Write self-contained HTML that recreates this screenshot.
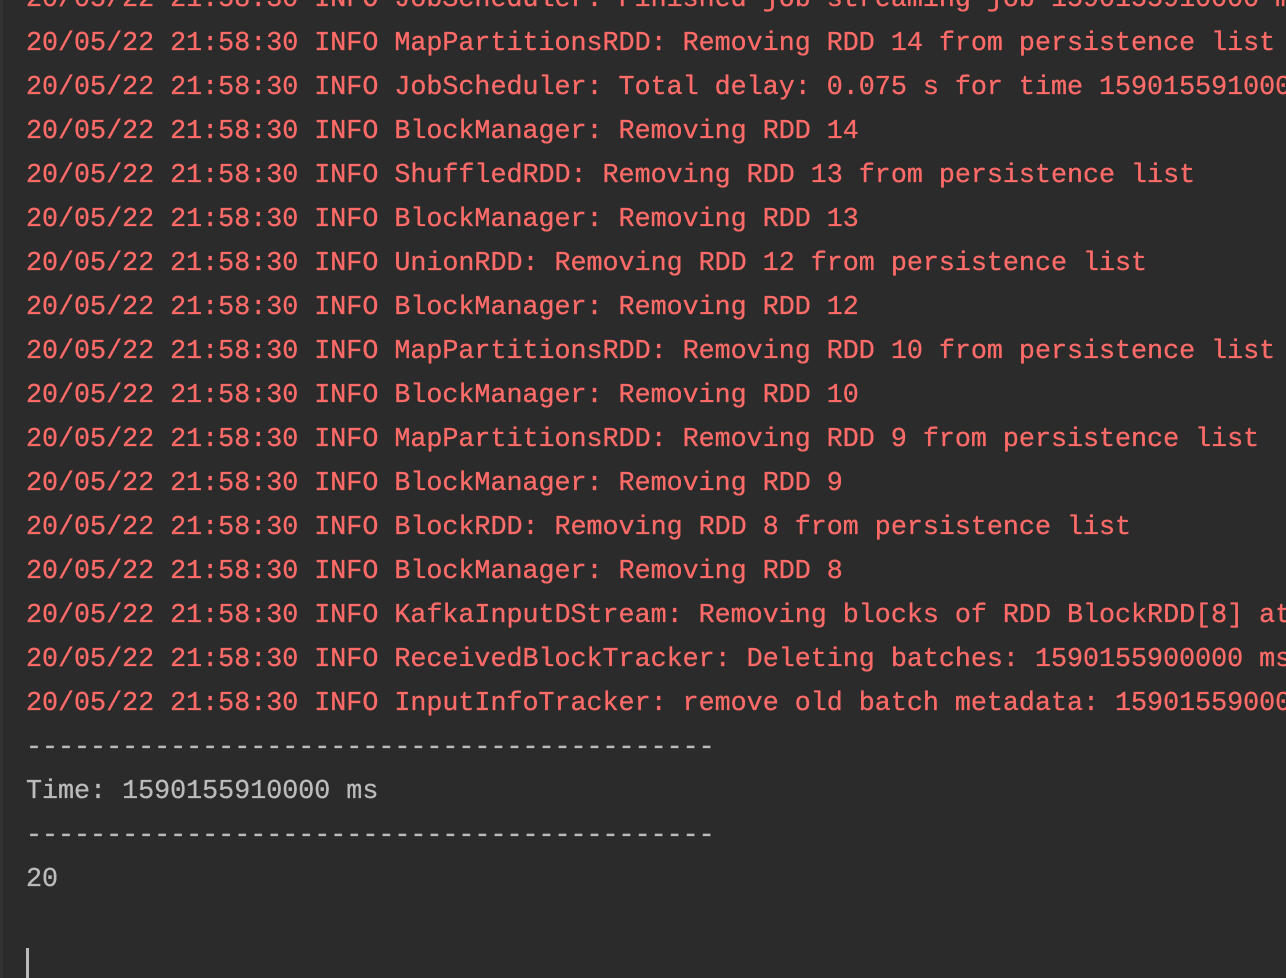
<!DOCTYPE html>
<html><head><meta charset="utf-8"><style>
html,body{margin:0;padding:0;width:1286px;height:978px;overflow:hidden;background:#2b2b2b;}
.strip{position:absolute;left:0;top:0;width:3px;height:978px;background:#313335;}
.c{position:absolute;left:26px;top:-22px;width:1260px;overflow:hidden;font-family:"Liberation Mono",monospace;font-size:26.7px;line-height:44px;white-space:pre;color:#ff6b68;-webkit-text-stroke:0.3px currentColor;}
.g{color:#bbbbbb;}
.cur{position:absolute;left:26px;top:948px;width:3px;height:30px;background:#bbbbbb;}
</style></head><body>
<div class="strip"></div>
<div class="c">20/05/22 21:58:30 INFO JobScheduler: Finished job streaming job 1590155910000 ms.0
20/05/22 21:58:30 INFO MapPartitionsRDD: Removing RDD 14 from persistence list
20/05/22 21:58:30 INFO JobScheduler: Total delay: 0.075 s for time 1590155910000 ms
20/05/22 21:58:30 INFO BlockManager: Removing RDD 14
20/05/22 21:58:30 INFO ShuffledRDD: Removing RDD 13 from persistence list
20/05/22 21:58:30 INFO BlockManager: Removing RDD 13
20/05/22 21:58:30 INFO UnionRDD: Removing RDD 12 from persistence list
20/05/22 21:58:30 INFO BlockManager: Removing RDD 12
20/05/22 21:58:30 INFO MapPartitionsRDD: Removing RDD 10 from persistence list
20/05/22 21:58:30 INFO BlockManager: Removing RDD 10
20/05/22 21:58:30 INFO MapPartitionsRDD: Removing RDD 9 from persistence list
20/05/22 21:58:30 INFO BlockManager: Removing RDD 9
20/05/22 21:58:30 INFO BlockRDD: Removing RDD 8 from persistence list
20/05/22 21:58:30 INFO BlockManager: Removing RDD 8
20/05/22 21:58:30 INFO KafkaInputDStream: Removing blocks of RDD BlockRDD[8] at
20/05/22 21:58:30 INFO ReceivedBlockTracker: Deleting batches: 1590155900000 ms
20/05/22 21:58:30 INFO InputInfoTracker: remove old batch metadata: 1590155900000 ms
<span class="g">-------------------------------------------
Time: 1590155910000 ms
-------------------------------------------
20</span></div>
<div class="cur"></div>
</body></html>
